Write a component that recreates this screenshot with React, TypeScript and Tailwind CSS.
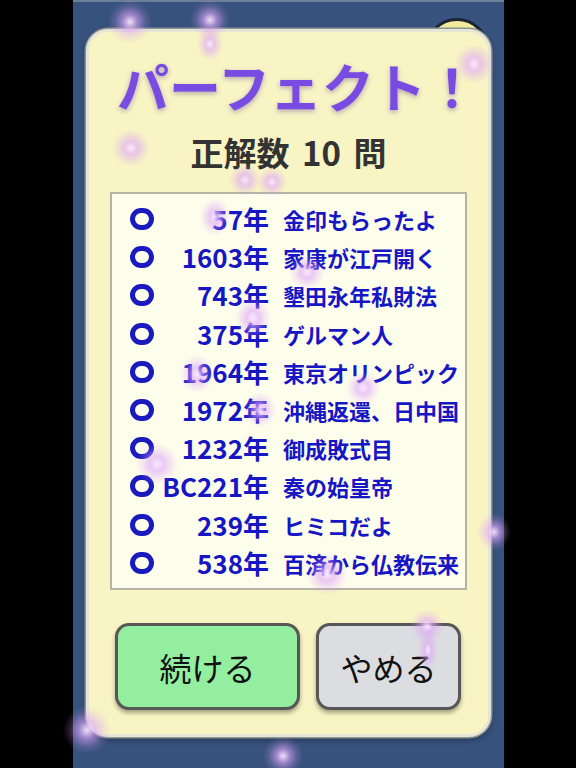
import React from 'react';

type Answer = {
  year: string;
  text: string;
};

const answers: Answer[] = [
  { year: '57年', text: '金印もらったよ' },
  { year: '1603年', text: '家康が江戸開く' },
  { year: '743年', text: '墾田永年私財法' },
  { year: '375年', text: 'ゲルマン人' },
  { year: '1964年', text: '東京オリンピック' },
  { year: '1972年', text: '沖縄返還、日中国' },
  { year: '1232年', text: '御成敗式目' },
  { year: 'BC221年', text: '秦の始皇帝' },
  { year: '239年', text: 'ヒミコだよ' },
  { year: '538年', text: '百済から仏教伝来' },
];

// キラキラの粒 (x, y, w, h)
const sparkles: [number, number, number, number][] = [
  [130, 22, 44, 44],
  [210, 20, 40, 40],
  [210, 44, 26, 34],
  [474, 64, 40, 40],
  [131, 148, 38, 38],
  [245, 180, 32, 32],
  [272, 182, 30, 30],
  [215, 217, 30, 38],
  [307, 272, 36, 36],
  [253, 318, 36, 42],
  [197, 374, 34, 38],
  [363, 388, 34, 34],
  [260, 410, 32, 36],
  [157, 464, 42, 42],
  [327, 574, 42, 42],
  [494, 532, 34, 38],
  [427, 626, 34, 34],
  [428, 650, 20, 40],
  [87, 730, 48, 48],
  [283, 756, 40, 40],
];

function AnswerRow({ answer }: { answer: Answer }) {
  return (
    <div className="flex items-center h-[38.2px] text-[#1616c4] font-bold">
      <div className="w-[24px] h-[22px] rounded-full border-[5px] border-[#1a1abf] shrink-0" />
      <div className="w-[115px] text-right text-[26px] leading-none">{answer.year}</div>
      <div className="ml-[14px] text-[22px] leading-none whitespace-nowrap">{answer.text}</div>
    </div>
  );
}

export default function App() {
  return (
    <div className="relative w-[576px] h-[768px] bg-black overflow-hidden font-['Noto_Sans_CJK_JP','Noto_Sans',sans-serif]">
      <div className="relative ml-[73px] w-[431px] h-full bg-[#37527d] border-t-[2px] border-[#6d7f98] pt-[27px] pl-[13px]">
        {/* 裏にある黄色い丸 */}
        <div className="absolute left-[352px] top-[16px] w-[64px] h-[64px] rounded-full bg-[#f4ec9c] border-[3px] border-[#1c2533]" />

        <div className="relative z-10 w-[405px] h-[708px] rounded-[22px] bg-[#f8f4c4] border-[3px] border-[#e6e6d8] shadow-[0_0_0_1.5px_#8d958f,0_3px_6px_rgba(0,0,0,0.35)] flex flex-col items-center">
          <div className="mt-[24px] ml-[18px] h-[60px] leading-[60px] text-[52px] font-bold text-[#7a4be3] [text-shadow:0_2px_5px_rgba(90,70,150,0.45)] whitespace-nowrap">
            パーフェクト！
          </div>
          <div className="mt-[14px] h-[44px] leading-[44px] text-[33px] font-bold text-[#333333] whitespace-nowrap [word-spacing:5px]">
            正解数 10 問
          </div>

          <div className="mt-[18px] w-[357px] h-[398px] bg-[#fdfdec] border-[2px] border-[#b4b4a4] py-[6px] pl-[18px]">
            {answers.map((a) => (
              <AnswerRow key={a.year} answer={a} />
            ))}
          </div>

          <div className="mt-[33px] w-full flex pl-[26px] gap-[16px]">
            <button className="w-[185px] h-[87px] rounded-[14px] bg-[#93ef9f] border-[3px] border-[#575757] shadow-[0_3px_4px_rgba(0,0,0,0.35)] text-[32px] font-normal text-[#111111]">
              続ける
            </button>
            <button className="w-[145px] h-[87px] rounded-[14px] bg-[#dcdde0] border-[3px] border-[#575757] shadow-[0_3px_4px_rgba(0,0,0,0.35)] text-[32px] font-normal text-[#111111]">
              やめる
            </button>
          </div>
        </div>
      </div>

      {sparkles.map(([x, y, w, h], i) => (
        <div
          key={i}
          className="absolute z-20 pointer-events-none rounded-full bg-[radial-gradient(closest-side,rgba(250,230,255,0.95)_0%,rgba(222,165,250,0.6)_35%,rgba(215,150,250,0.2)_70%,rgba(210,140,250,0)_100%)]"
          style={{ left: x - w / 2, top: y - h / 2, width: w, height: h }}
        />
      ))}
    </div>
  );
}
